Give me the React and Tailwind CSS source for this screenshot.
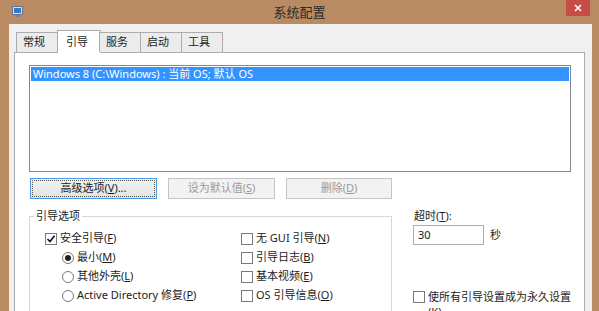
import React from 'react';

const font = { fontFamily: '"Noto Sans", "Noto Sans CJK SC", sans-serif' };

function Check({ checked, label, className = '' }) {
  return (
    <div className={`flex items-center h-[19px] ${className}`}>
      <span className="w-[12px] h-[12px] border border-[#7a7a7a] bg-white flex items-center justify-center shrink-0">
        {checked && (
          <svg width="10" height="10" viewBox="0 0 10 10">
            <path d="M1.5 5 L4 7.5 L8.5 1.8" stroke="#111" strokeWidth="1.6" fill="none" />
          </svg>
        )}
      </span>
      <span className="ml-[3px] whitespace-nowrap">{label}</span>
    </div>
  );
}

function Radio({ checked, label }) {
  return (
    <div className="flex items-center h-[19px] pl-[17px]">
      <span className="w-[12px] h-[12px] rounded-full border border-[#7a7a7a] bg-white flex items-center justify-center shrink-0">
        {checked && <span className="w-[6px] h-[6px] rounded-full bg-[#222]" />}
      </span>
      <span className="ml-[3px] whitespace-nowrap">{label}</span>
    </div>
  );
}

const U = ({ children }) => <span className="underline">{children}</span>;

export default function App() {
  const tabs = ['常规', '引导', '服务', '启动', '工具'];

  return (
    <div className="w-[599px] h-[311px] overflow-hidden bg-[#b98b63] flex flex-col text-[11px] text-[#1c1c1c]" style={font}>
      {/* title bar */}
      <div className="h-[24px] shrink-0 flex items-start">
        <div className="pl-[12px] pt-[6px] w-[33px]">
          <svg width="11" height="11" viewBox="0 0 11 11">
            <rect x="0.5" y="0.5" width="10" height="8" fill="#d8dde6" stroke="#6b7480" />
            <rect x="2" y="2" width="7" height="5" fill="#3a78c8" />
            <rect x="3" y="9" width="5" height="2" fill="#7a818a" />
          </svg>
        </div>
        <div className="flex-1 text-center pt-[3px] text-[13px] text-[#2a2a2a]">系统配置</div>
        <div className="w-[24px] h-[16px] bg-[#c74c46] mr-[9px] flex items-center justify-center">
          <svg width="8" height="8" viewBox="0 0 8 8">
            <path d="M1 1 L7 7 M7 1 L1 7" stroke="#fff" strokeWidth="1.6" />
          </svg>
        </div>
      </div>

      {/* body */}
      <div className="flex-1 flex px-[9px]">
        <div className="flex-1 bg-[#f0f0f0] pt-[6px] flex flex-col">
          {/* tabs */}
          <div className="flex items-end h-[22px] pl-[7px] relative z-10">
            {tabs.map((t, i) =>
              i === 1 ? (
                <div key={t} className="w-[44px] h-[23px] -mx-[1px] -mb-[1px] bg-white border border-[#acacac] border-b-0 flex items-start pl-[8px] pt-[3px]">
                  {t}
                </div>
              ) : (
                <div key={t} className="w-[42px] h-[20px] bg-[#ececec] border border-[#acacac] border-b-0 -ml-[1px] first:ml-0 flex items-center pl-[6px]">
                  {t}
                </div>
              )
            )}
          </div>

          {/* tab page */}
          <div className="flex-1 ml-[5px] mr-[7px] bg-white border border-[#acacac] border-b-0 pt-[12px] pl-[14px] pr-[13px]">
            {/* boot list */}
            <div className="h-[107px] border border-[#828790] bg-white p-[1px]">
              <div className="h-[14px] bg-[#3393ff] text-white leading-[14px] pl-[2px] whitespace-nowrap">
                Windows 8 (C:\Windows) : 当前 OS; 默认 OS
              </div>
            </div>

            {/* buttons */}
            <div className="flex mt-[6px] pl-[1px] gap-[11px]">
              <div className="w-[127px] h-[21px] border border-[#4d9be6] bg-gradient-to-b from-[#f2f2f2] to-[#e2e2e2] p-[1px]">
                <div className="w-full h-full border border-dotted border-[#555] flex items-center justify-center">
                  高级选项(<U>V</U>)...
                </div>
              </div>
              <div className="w-[107px] h-[21px] border border-[#c4c4c4] bg-[#f2f2f2] text-[#9a9a9a] flex items-center justify-center">
                设为默认值(<U>S</U>)
              </div>
              <div className="w-[106px] h-[21px] border border-[#c4c4c4] bg-[#f2f2f2] text-[#9a9a9a] flex items-center justify-center">
                删除(<U>D</U>)
              </div>
            </div>

            {/* options */}
            <div className="flex mt-[9px]">
              <div className="w-[363px] shrink-0 mt-[8px] border border-[#d8d8d8] border-b-0 h-[120px] relative">
                <div className="absolute -top-[9px] left-[4px] bg-white px-[2px] leading-[16px]">引导选项</div>
                <div className="flex pt-[12px]">
                  <div className="pl-[15px] w-[211px]">
                    <Check checked label={<>安全引导(<U>F</U>)</>} />
                    <Radio checked label={<>最小(<U>M</U>)</>} />
                    <Radio label={<>其他外壳(<U>L</U>)</>} />
                    <Radio label={<>Active Directory 修复(<U>P</U>)</>} />
                  </div>
                  <div>
                    <Check label={<>无 GUI 引导(<U>N</U>)</>} />
                    <Check label={<>引导日志(<U>B</U>)</>} />
                    <Check label={<>基本视频(<U>E</U>)</>} />
                    <Check label={<>OS 引导信息(<U>O</U>)</>} />
                  </div>
                </div>
              </div>

              <div className="ml-[21px] flex flex-col">
                <div className="leading-[16px] pl-[1px]">超时(<U>T</U>):</div>
                <div className="flex items-center mt-[1px]">
                  <div className="w-[71px] h-[20px] border border-[#abadb3] bg-white pl-[4px] leading-[18px]">30</div>
                  <span className="ml-[6px]">秒</span>
                </div>
                <div className="mt-[44px] flex items-start">
                  <span className="w-[12px] h-[12px] border border-[#7a7a7a] bg-white shrink-0 mt-[2px]" />
                  <span className="ml-[3px] leading-[15px] whitespace-nowrap">
                    使所有引导设置成为永久设置
                    <br />
                    (<U>K</U>)
                  </span>
                </div>
              </div>
            </div>
          </div>
        </div>
      </div>
    </div>
  );
}
